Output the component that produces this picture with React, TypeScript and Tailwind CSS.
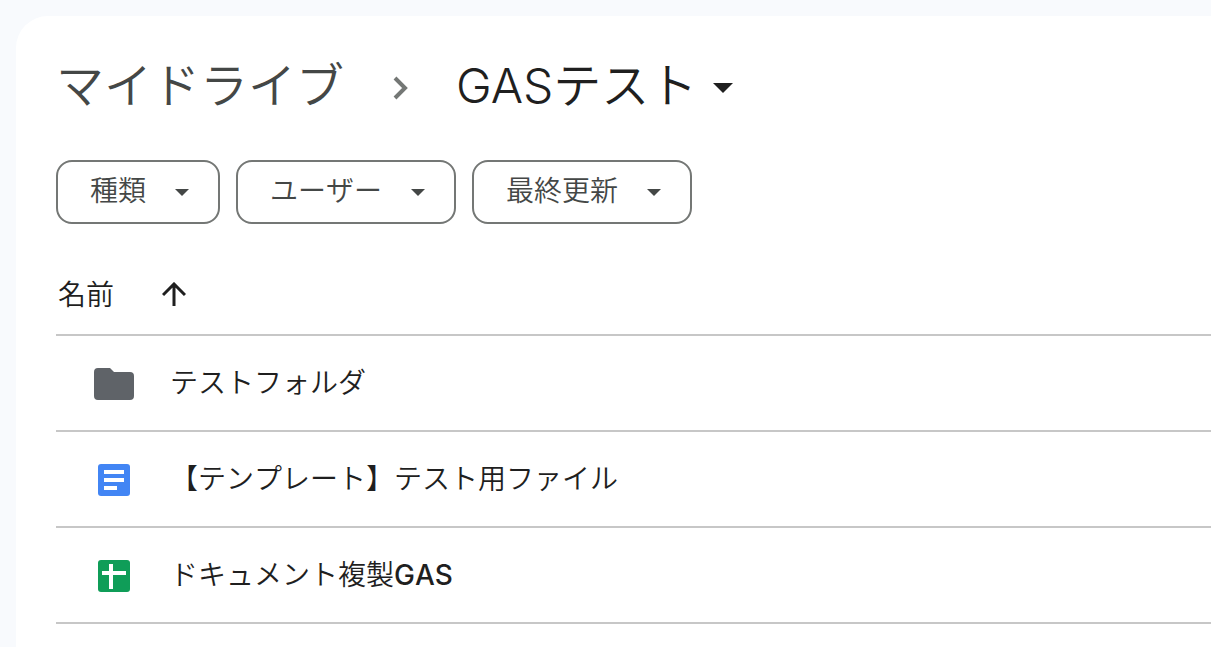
import type { ReactNode } from "react";

type FileKind = "folder" | "doc" | "sheet";

type DriveFile = {
  id: string;
  name: ReactNode;
  kind: FileKind;
};

const filters = ["種類", "ユーザー", "最終更新"];

const files: DriveFile[] = [
  { id: "1", name: "テストフォルダ", kind: "folder" },
  { id: "2", name: "【テンプレート】テスト用ファイル", kind: "doc" },
  {
    id: "3",
    name: (
      <>
        ドキュメント複製<span className="font-medium">GAS</span>
      </>
    ),
    kind: "sheet",
  },
];

const Caret = ({ className }: { className: string }) => (
  <svg viewBox="0 0 20 10" className={className} aria-hidden="true">
    <path d="M0 0h20L10 10z" fill="currentColor" />
  </svg>
);

const FileIcon = ({ kind }: { kind: FileKind }) => {
  if (kind === "folder") {
    return (
      <svg viewBox="0 0 40 32" className="h-8 w-10" aria-hidden="true">
        <path
          d="M4 0h12l4 4h16a4 4 0 0 1 4 4v20a4 4 0 0 1-4 4H4a4 4 0 0 1-4-4V4a4 4 0 0 1 4-4z"
          fill="#5f6368"
        />
      </svg>
    );
  }

  if (kind === "doc") {
    return (
      <svg viewBox="0 0 32 32" className="size-8" aria-hidden="true">
        <rect width="32" height="32" rx="3" fill="#4285f4" />
        <path d="M6 6h20v4H6zM6 14h20v4H6zM6 22h13v4H6z" fill="#fff" />
      </svg>
    );
  }

  return (
    <svg viewBox="0 0 32 32" className="size-8" aria-hidden="true">
      <rect width="32" height="32" rx="3" fill="#0f9d58" />
      <path d="M11 4h4v7h13v4H15v14h-4V15H4v-4h7z" fill="#fff" />
    </svg>
  );
};

const Breadcrumb = () => (
  <nav className="flex h-24 items-center pb-1 text-5xl">
    <a href="#my-drive" className="text-[#444746]">
      マイドライブ
    </a>
    <svg
      viewBox="0 0 16 24"
      className="mx-12 mt-1 h-6 w-4"
      fill="none"
      stroke="#747775"
      strokeWidth="4"
      aria-hidden="true"
    >
      <path d="M3 2l10 10L3 22" />
    </svg>
    <button type="button" className="flex items-center gap-4 text-[#1f1f1f]">
      GASテスト
      <Caret className="mt-1 h-[10px] w-5" />
    </button>
  </nav>
);

const FilterChip = ({ label }: { label: string }) => (
  <button
    type="button"
    className="flex h-16 items-center rounded-2xl border-2 border-[#747775] pr-7 pb-0.5 pl-8 text-[28px] leading-10 text-[#444746] [font-kerning:none]"
  >
    {label}
    <span className="ml-7 flex w-4 justify-center">
      <Caret className="mt-0.5 h-[7px] w-[14px]" />
    </span>
  </button>
);

const FileTable = () => (
  <table className="mt-[15px] w-full text-left text-[28px] leading-10 text-[#1f1f1f] [font-kerning:none]">
    <thead>
      <tr className="h-24 border-b-2 border-[#c7c7c7]">
        <th colSpan={2} className="pt-4 pl-0.5 font-[350]">
          <button type="button" className="flex items-center gap-12">
            名前
            <svg
              viewBox="0 0 24 24"
              className="mb-0.5 size-6"
              fill="none"
              stroke="currentColor"
              strokeWidth="3"
              aria-hidden="true"
            >
              <path d="M12 24V2M1 13L12 2l11 11" />
            </svg>
          </button>
        </th>
      </tr>
    </thead>
    <tbody>
      {files.map((file) => (
        <tr key={file.id} className="h-24 border-b-2 border-[#c7c7c7]">
          <td className="w-[114px] pt-0.5 pl-[38px]">
            <div className="flex w-10 justify-center">
              <FileIcon kind={file.kind} />
            </div>
          </td>
          <td>{file.name}</td>
        </tr>
      ))}
    </tbody>
  </table>
);

const App = () => (
  <div className="min-h-screen bg-[#f8fafd] pt-4 pl-4 font-['Inter','Noto_Sans_CJK_JP',sans-serif] font-[350]">
    <main
      lang="ja"
      className="min-h-[calc(100vh-16px)] rounded-tl-[32px] bg-white pt-6 pl-10"
    >
      <Breadcrumb />
      <div className="mt-6 flex gap-4">
        {filters.map((label) => (
          <FilterChip key={label} label={label} />
        ))}
      </div>
      <FileTable />
    </main>
  </div>
);

export default App;
